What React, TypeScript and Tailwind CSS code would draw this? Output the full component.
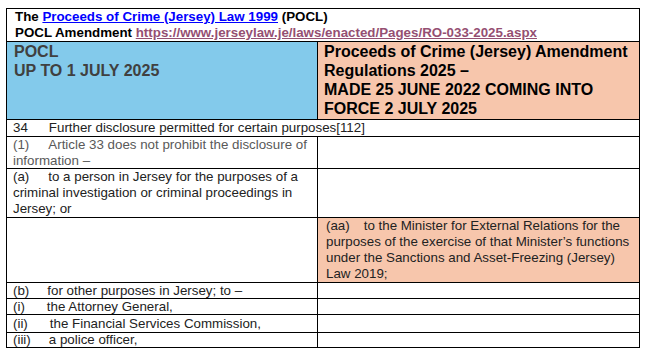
import React from 'react'

const cell = 'border border-black align-top p-0 pl-[6px]'

function Item({ label, mr, children, h, lh = 'leading-[16px]', cls = 'text-[#222]' }: { label: string; mr: string; children: React.ReactNode; h: string; lh?: string; cls?: string }) {
  return (
    <div className={`text-[13.33px] ${h} ${lh} ${cls}`}>
      <span className={mr}>{label}</span>
      {children}
    </div>
  )
}

export default function App() {
  return (
    <div className="w-[648px] h-[351px] bg-white overflow-hidden pt-[8px] pl-[6px]" style={{ fontFamily: '"Liberation Sans", Arial, sans-serif' }}>
      <table className="border-collapse table-fixed w-[633px]">
        <colgroup>
          <col className="w-[311px]" />
          <col className="w-[322px]" />
        </colgroup>
        <tbody>
          <tr>
            <td colSpan={2} className="border border-black align-top p-0 pl-[8px]">
              <div className="h-[32px] text-[13.33px] leading-[16px] font-bold text-black">
                <div>
                  The <span className="text-[#0000ff] underline">Proceeds of Crime (Jersey) Law 1999</span> (POCL)
                </div>
                <div>
                  POCL Amendment <span className="text-[#954f72] underline">https://www.jerseylaw.je/laws/enacted/Pages/RO-033-2025.aspx</span>
                </div>
              </div>
            </td>
          </tr>
          <tr>
            <td className="border border-black align-top bg-[#83caeb] p-0 pl-[7px]">
              <div className="h-[77px] text-[16px] leading-[19px] font-bold text-[#404040]">
                <div>POCL</div>
                <div>UP TO 1 JULY 2025</div>
              </div>
            </td>
            <td className="border border-black align-top bg-[#f7c6ac] p-0 pl-[6px]">
              <div className="h-[77px] text-[16px] leading-[19px] font-bold text-black">
                Proceeds of Crime (Jersey) Amendment Regulations 2025 –<br />
                MADE 25 JUNE 2022 COMING INTO FORCE 2 JULY 2025
              </div>
            </td>
          </tr>
          <tr>
            <td colSpan={2} className={cell}>
              <Item label="34" mr="mr-[21px]" h="h-[16px]">Further disclosure permitted for certain purposes[112]</Item>
            </td>
          </tr>
          <tr>
            <td className={cell}>
              <Item label="(1)" mr="mr-[19px]" h="h-[31px]" cls="text-[#595959]">Article 33 does not prohibit the disclosure of information –</Item>
            </td>
            <td className={cell}></td>
          </tr>
          <tr>
            <td className={cell}>
              <Item label="(a)" mr="mr-[19px]" h="h-[48px]">to a person in Jersey for the purposes of a criminal investigation or criminal proceedings in Jersey; or</Item>
            </td>
            <td className={cell}></td>
          </tr>
          <tr>
            <td className={cell}></td>
            <td className={`${cell} bg-[#f7c6ac] pl-[8px]`}>
              <Item label="(aa)" mr="mr-[14px]" h="h-[64px]">to the Minister for External Relations for the purposes of the exercise of that Minister’s functions under the Sanctions and Asset-Freezing (Jersey) Law 2019;</Item>
            </td>
          </tr>
          <tr>
            <td className={cell}>
              <Item label="(b)" mr="mr-[18px]" h="h-[15px]" lh="leading-[15px]">for other purposes in Jersey; to –</Item>
            </td>
            <td className={cell}></td>
          </tr>
          <tr>
            <td className={cell}>
              <Item label="(i)" mr="mr-[22px]" h="h-[15px]" lh="leading-[15px]">the Attorney General,</Item>
            </td>
            <td className={cell}></td>
          </tr>
          <tr>
            <td className={cell}>
              <Item label="(ii)" mr="mr-[22px]" h="h-[17px]" lh="leading-[17px]">the Financial Services Commission,</Item>
            </td>
            <td className={cell}></td>
          </tr>
          <tr>
            <td className={cell}>
              <Item label="(iii)" mr="mr-[18px]" h="h-[14px]" lh="leading-[14px]">a police officer,</Item>
            </td>
            <td className={cell}></td>
          </tr>
        </tbody>
      </table>
    </div>
  )
}
